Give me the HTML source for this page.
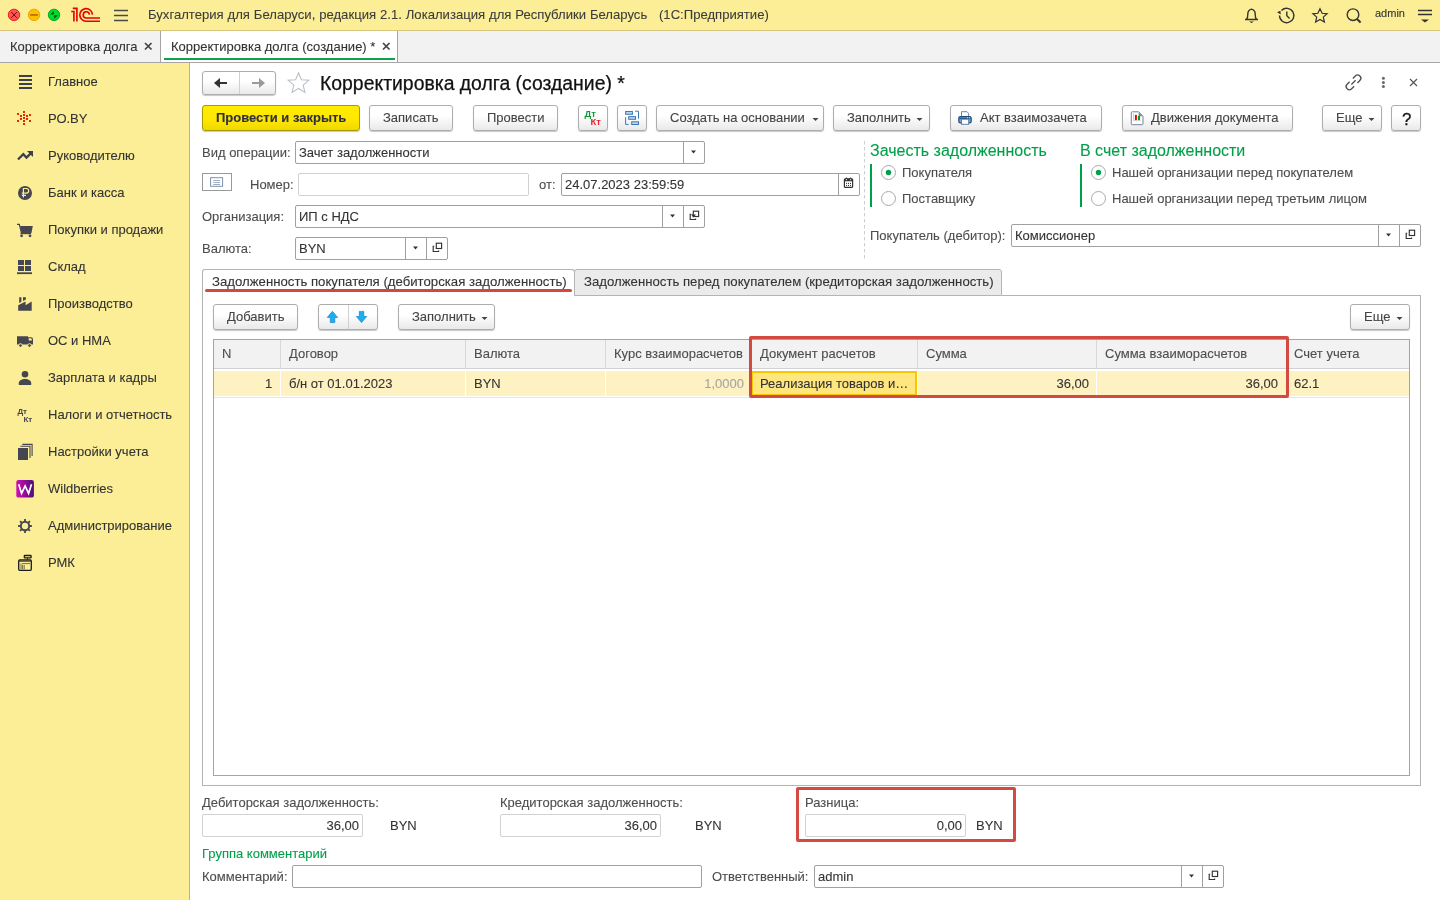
<!DOCTYPE html>
<html><head><meta charset="utf-8">
<style>
*{box-sizing:border-box;margin:0;padding:0}
html,body{width:1440px;height:900px;overflow:hidden;background:#fff}
.t{will-change:transform;-webkit-text-stroke:.1px currentColor}
body{position:relative;font-family:"Liberation Sans",sans-serif;font-size:13px;color:#4d4d4d}
.a{position:absolute}
.t{position:absolute;white-space:pre;line-height:15px;font-size:13px}
#top{left:0;top:0;width:1440px;height:31px;background:#fcee96;border-bottom:1px solid #d6c67f}
#tabs{left:0;top:31px;width:1440px;height:32px;background:#f2f2f2;border-bottom:1px solid #a6a6a6}
#side{left:0;top:63px;width:190px;height:837px;background:#fcee96;border-right:1px solid #c6b65e}
.btn{position:absolute;height:26px;border:1px solid #adadad;border-radius:3px;background:linear-gradient(#fff 40%,#e9e9e9);box-shadow:0 1px 1px rgba(0,0,0,.22);}
.inp{position:absolute;height:22px;border:1px solid #a0a0a0;border-radius:2px;background:#fff}
.inpl{position:absolute;height:22px;border:1px solid #d2d2d2;border-radius:2px;background:#fff}
.red{position:absolute;border:3px solid #d24a42;border-radius:2px}
.g{color:#00a04a}
</style></head><body>
<div id="top" class="a"></div>
<div id="tabs" class="a"></div>
<div id="side" class="a"></div>

<!-- TOP BAR -->
<svg class="a" style="left:0;top:0" width="140" height="30">
 <circle cx="14" cy="14.85" r="5.7" fill="#ff5552" stroke="#ec1c1c" stroke-width="1"/>
 <path d="M11.2 12l5.7 5.8M16.9 12l-5.7 5.8" stroke="#6e0c0c" stroke-width="1"/>
 <circle cx="34" cy="14.85" r="5.7" fill="#ffc000" stroke="#f2a300" stroke-width="1"/>
 <path d="M30.1 14.95h7.8" stroke="#b36e00" stroke-width="1.7"/>
 <circle cx="54" cy="14.85" r="5.7" fill="#00d92e" stroke="#00ad22" stroke-width="1"/>
 <path d="M50.2 14.6L53.8 11V14.6ZM54.2 18.8V15.2H58Z" fill="#005a12"/>
 <g fill="none" stroke="#e60000" stroke-width="1.6">
  <path d="M71.2 11.5H73.9V21.6"/>
  <path d="M72.8 8.4H76.9V21.6"/>
  <path d="M92.4 14.6A6.3 6.3 0 1 0 86.3 21.2H100"/>
  <path d="M89.4 14.6A3.1 3.1 0 1 0 86.3 18H100"/>
 </g>
 <path d="M114 10.5h14M114 15.5h14M114 20.5h14" stroke="#4a4a4a" stroke-width="1.3"/>
</svg>
<div class="t" style="left:148px;top:7px;color:#3c3c3c;font-size:13.1px;word-spacing:.3px">Бухгалтерия для Беларуси, редакция 2.1. Локализация для Республики Беларусь   (1С:Предприятие)</div>
<svg class="a" style="left:1240px;top:0" width="200" height="30">
 <g fill="none" stroke="#333" stroke-width="1.4">
  <path d="M5 19.5h13M6.5 19.5c1.2-1.2 1.3-2.6 1.3-5.2 0-3 1.6-4.8 3.7-5.2 2.1.4 3.7 2.2 3.7 5.2 0 2.6.1 4 1.3 5.2"/>
  <g transform="translate(-7 0)"><path d="M46.5 15.5a7.2 7.2 0 1 0 2-5"/><path d="M53.8 11.5v4.3l2.8 2.8"/></g>
  <path d="M80 8.7l2.1 4.6 5 .5-3.8 3.3 1.1 4.9-4.4-2.6-4.4 2.6 1.1-4.9-3.8-3.3 5-.5z" stroke-width="1.2"/>
  <circle cx="113" cy="14.7" r="5.8"/>
  <path d="M117 19l3.6 3.4" stroke-width="2"/>
  <path d="M178 10.5h14M178 14.5h14"/>
 </g>
 <path d="M9 21.5h5l-2.5 1.6z" fill="#333"/>
 <path d="M37 12.3l3.4-1.5.4 3.6z" fill="#333"/>
 <path d="M181 19.6h8l-4 3z" fill="#333"/>
</svg>
<div class="t" style="left:1375px;top:6px;font-size:11px;color:#333">admin</div>
<!-- TABS -->
<div class="a" style="left:160px;top:31px;width:1px;height:31px;background:#a4a4a4"></div>
<div class="a" style="left:161px;top:31px;width:237px;height:31px;background:#fff;border-right:1px solid #a4a4a4"></div>
<div class="a" style="left:164px;top:58px;width:231px;height:2px;background:#0fa24a"></div>
<div class="t" style="left:10px;top:39px;color:#333">Корректировка долга</div>
<div class="t" style="left:171px;top:39px;color:#333">Корректировка долга (создание) *</div>
<svg class="a" style="left:140px;top:40px" width="260" height="14">
 <path d="M5 3l6.5 6.5M11.5 3L5 9.5" stroke="#444" stroke-width="1.7"/>
 <path d="M243 3l6.5 6.5M249.5 3L243 9.5" stroke="#444" stroke-width="1.7"/>
</svg>

<!-- SIDEBAR -->
<div class="t" style="left:48px;top:74px;color:#333">Главное</div>
<div class="t" style="left:48px;top:111px;color:#333">РО.BY</div>
<div class="t" style="left:48px;top:148px;color:#333">Руководителю</div>
<div class="t" style="left:48px;top:185px;color:#333">Банк и касса</div>
<div class="t" style="left:48px;top:222px;color:#333">Покупки и продажи</div>
<div class="t" style="left:48px;top:259px;color:#333">Склад</div>
<div class="t" style="left:48px;top:296px;color:#333">Производство</div>
<div class="t" style="left:48px;top:333px;color:#333">ОС и НМА</div>
<div class="t" style="left:48px;top:370px;color:#333">Зарплата и кадры</div>
<div class="t" style="left:48px;top:407px;color:#333">Налоги и отчетность</div>
<div class="t" style="left:48px;top:444px;color:#333">Настройки учета</div>
<div class="t" style="left:48px;top:481px;color:#333">Wildberries</div>
<div class="t" style="left:48px;top:518px;color:#333">Администрирование</div>
<div class="t" style="left:48px;top:555px;color:#333">РМК</div>
<svg class="a" style="left:0;top:63px" width="48" height="530" viewBox="0 63 48 530">
 <g fill="#3d3f4d">
  <rect x="19" y="75" width="13" height="2"/><rect x="19" y="79" width="13" height="2"/><rect x="19" y="83" width="13" height="2"/><rect x="19" y="87" width="13" height="2"/>
 </g>
 <g fill="#e62b00"><rect x="23" y="111" width="2" height="2"/><rect x="23" y="114" width="2" height="2"/><rect x="23" y="117" width="2" height="2"/><rect x="23" y="120" width="2" height="2"/><rect x="23" y="123" width="2" height="2"/><rect x="17" y="113" width="2" height="2"/><rect x="17" y="120" width="2" height="2"/><rect x="20" y="115" width="2" height="2"/><rect x="20" y="118" width="2" height="2"/><rect x="26" y="115" width="2" height="2"/><rect x="26" y="118" width="2" height="2"/><rect x="29" y="114" width="2" height="2"/><rect x="29" y="120" width="2" height="2"/></g>
 <g fill="none" stroke="#3d3f4d" stroke-width="2.2" stroke-linejoin="miter">
  <path d="M18 159.5l5.3-5.3 3.2 3.4 4.5-4.5"/>
 </g>
 <path d="M27 151h6v6z" fill="#3d3f4d"/>
 <circle cx="25" cy="193" r="7" fill="#45464f"/>
 <path d="M23.4 197.5v-9h3a2.3 2.3 0 0 1 0 4.6h-4.6M21.8 195.3h4.2" fill="none" stroke="#fcee96" stroke-width="1.2"/>
 <path d="M17 224h2.4l.8 2h12.6l-1.4 7.2H21.6l-1.7-8.2" fill="#45464f"/>
 <path d="M17 224.3h2.3l2.4 9.6" fill="none" stroke="#45464f" stroke-width="1.2"/>
 <rect x="20.5" y="232.8" width="10.5" height="1.4" fill="#45464f"/>
 <circle cx="21.6" cy="235.8" r="1.4" fill="#45464f"/><circle cx="30" cy="235.8" r="1.4" fill="#45464f"/>
 <g fill="#45464f">
  <rect x="18" y="260" width="6" height="5"/><rect x="25" y="260" width="6" height="5"/>
  <rect x="18" y="266" width="6" height="5"/><rect x="25" y="266" width="6" height="5"/>
  <rect x="17" y="272.3" width="15" height="1.8"/>
 </g>
 <path d="M18.2 310.7V305.2L25.6 301.4V305.2L31.7 301.4V310.7ZM19.2 297.2H21.4V301.8L19.2 303ZM23 297.2H25.9V299.6L23 301.1Z" fill="#45464f"/>
 <path d="M17 336.2H28V344.6H17ZM28 337.2H31Q33 337.2 33 339.5V344.6H28Z" fill="#45464f"/>
 <path d="M28.7 338.3H30.9Q31.9 338.5 32 340.4H28.7Z" fill="#fcee96"/>
 <circle cx="20.5" cy="345.5" r="1.8" fill="#45464f" stroke="#fcee96" stroke-width="1"/><circle cx="29.5" cy="345.5" r="1.8" fill="#45464f" stroke="#fcee96" stroke-width="1"/>
 <circle cx="25" cy="374.3" r="3.3" fill="#45464f"/>
 <path d="M18.8 385v-1.8c0-2.6 2.6-4.3 6.2-4.3s6.2 1.7 6.2 4.3v1.8z" fill="#45464f"/>
 <text x="17.6" y="413.6" font-family="Liberation Sans" font-size="8" font-weight="bold" fill="#45464f" letter-spacing="-.3">Дт</text>
 <text x="23.6" y="422" font-family="Liberation Sans" font-size="8" font-weight="bold" fill="#45464f" letter-spacing="-.3">Кт</text>
 <rect x="18" y="448" width="10" height="12" fill="#45464f"/>
 <path d="M20.3 446.3h9.7v11.7M22.3 444.4h9.8v11.5" fill="none" stroke="#45464f" stroke-width="1.1"/>
 <defs><linearGradient id="wb" x1="0" y1="0" x2="1" y2="0"><stop offset="0" stop-color="#d20fb4"/><stop offset="1" stop-color="#4b0f78"/></linearGradient></defs>
 <rect x="16.3" y="480" width="17.6" height="17.6" rx="2.2" fill="url(#wb)"/>
 <path d="M18.7 484.2L21.6 493.4L25.1 486L28.6 493.4L31.5 484.2" fill="none" stroke="#fff" stroke-width="1.7" stroke-linejoin="miter"/>
 <g transform="translate(25 526)" fill="#45464f">
  <rect x="-.9" y="-7" width="1.8" height="14"/>
  <rect x="-.9" y="-7" width="1.8" height="14" transform="rotate(45)"/>
  <rect x="-.9" y="-7" width="1.8" height="14" transform="rotate(90)"/>
  <rect x="-.9" y="-7" width="1.8" height="14" transform="rotate(135)"/>
  <circle r="5.2"/>
  <circle r="3.2" fill="#fcee96"/>
 </g>
 <g fill="none" stroke="#1c1c1c" stroke-width="1.3">
  <rect x="18.7" y="560" width="12.6" height="10.3" rx="1"/>
  <rect x="24.3" y="555.5" width="6.8" height="2.4" rx=".6"/>
 </g>
 <path d="M19 561.5h12M21 563.5v6M22.6 565v4.5M24.2 565v4.5M22 563.6h8" stroke="#4a4a3a" stroke-width=".8"/>
 <path d="M27.5 558v2" stroke="#2f3038" stroke-width="1"/>
</svg>

<!-- FORM HEADER -->
<div class="btn" style="left:202px;top:71px;width:74px;height:24px"></div>
<div class="a" style="left:239px;top:72px;width:1px;height:22px;background:#d0d0d0"></div>
<svg class="a" style="left:202px;top:71px" width="74" height="24">
 <path d="M13 12h12" stroke="#333" stroke-width="2"/><path d="M12 12l6-5v10z" fill="#333"/>
 <path d="M50 12h12" stroke="#9a9a9a" stroke-width="2"/><path d="M63 12l-6-5v10z" fill="#9a9a9a"/>
</svg>
<svg class="a" style="left:286px;top:71px" width="26" height="24">
 <path d="M12.5 1.8l2.9 6.9 7.4.6-5.6 4.8 1.7 7.3-6.4-3.9-6.4 3.9 1.7-7.3-5.6-4.8 7.4-.6z" fill="none" stroke="#b9c0ca" stroke-width="1.1"/>
</svg>
<div class="t" style="left:320px;top:72px;font-size:19.4px;line-height:22px;color:#111;-webkit-text-stroke:.25px #111">Корректировка долга (создание) *</div>
<svg class="a" style="left:1340px;top:70px" width="90" height="26">
 <g transform="translate(13.5 12.4) rotate(-45)" fill="none" stroke="#4d4d4d" stroke-width="1.3">
  <path d="M2.3 -3.2H5.8A3.2 3.2 0 0 1 5.8 3.2H2.3M-2.3 -3.2H-5.8A3.2 3.2 0 0 0 -5.8 3.2H-2.3M-3 0H3"/>
 </g>
 <path d="M70 9l7 7M77 9l-7 7" stroke="#555" stroke-width="1.2" fill="none"/>
 <circle cx="43.4" cy="8.3" r="1.5" fill="#6a6a6a"/><circle cx="43.4" cy="12.5" r="1.5" fill="#6a6a6a"/><circle cx="43.4" cy="16.6" r="1.5" fill="#6a6a6a"/>
</svg>
<!-- TOOLBAR -->
<div class="btn" style="left:202px;top:105px;width:158px;border-color:#a89a00;background:linear-gradient(#ffeb00,#ffe800 55%,#f0d700)"></div>
<div class="t" style="left:216px;top:110px;font-weight:bold;color:#2e3040">Провести и закрыть</div>
<div class="btn" style="left:369px;top:105px;width:84px"></div>
<div class="t" style="left:383px;top:110px;color:#444">Записать</div>
<div class="btn" style="left:473px;top:105px;width:85px"></div>
<div class="t" style="left:487px;top:110px;color:#444">Провести</div>
<div class="btn" style="left:578px;top:105px;width:30px"></div>
<svg class="a" style="left:578px;top:105px" width="30" height="26">
 <text x="6.6" y="12" font-family="Liberation Sans" font-size="9.4" font-weight="bold" fill="#0a9a3c">Дт</text>
 <text x="12.6" y="19.9" font-family="Liberation Sans" font-size="9.4" font-weight="bold" fill="#e8202a">Кт</text>
</svg>
<div class="btn" style="left:617px;top:105px;width:30px"></div>
<svg class="a" style="left:617px;top:105px" width="30" height="26">
 <g fill="#bcd3ea" stroke="#3d7ab4" stroke-width="1">
  <rect x="8.6" y="6.5" width="6.8" height="2.8"/>
  <rect x="11.7" y="11.6" width="6.8" height="2.7"/>
  <rect x="14.7" y="16.8" width="6.8" height="2.7"/>
 </g>
 <path d="M8.6 12.2V19.4H11.7M18.1 6.2H21.5V13.7" fill="none" stroke="#3d7ab4" stroke-width="1"/>
</svg>
<div class="btn" style="left:656px;top:105px;width:168px"></div>
<div class="t" style="left:670px;top:110px;color:#444">Создать на основании</div>
<div class="btn" style="left:833px;top:105px;width:97px"></div>
<div class="t" style="left:847px;top:110px;color:#444">Заполнить</div>
<div class="btn" style="left:950px;top:105px;width:152px"></div>
<div class="t" style="left:980px;top:110px;color:#444">Акт взаимозачета</div>
<svg class="a" style="left:950px;top:105px" width="30" height="26">
 <path d="M11.5 11V6.7H17L18.6 8.3V11" fill="#fff" stroke="#56779c" stroke-width=".9"/>
 <defs><linearGradient id="pr" x1="0" y1="0" x2="0" y2="1"><stop offset="0" stop-color="#4f84bd"/><stop offset="1" stop-color="#8fb8e2"/></linearGradient></defs>
 <rect x="8.8" y="11.6" width="12.4" height="6.2" rx="1.6" fill="url(#pr)" stroke="#1d4d7f" stroke-width="1.2"/>
 <path d="M9.8 13.5H20.2" stroke="#1d4d7f" stroke-width=".9"/>
 <circle cx="17.5" cy="12.7" r=".5" fill="#fff"/><circle cx="19.5" cy="12.7" r=".5" fill="#fff"/>
 <rect x="11.5" y="14.2" width="7.2" height="5.1" fill="#fff" stroke="#56779c" stroke-width=".9"/>
</svg>
<div class="btn" style="left:1122px;top:105px;width:171px"></div>
<div class="t" style="left:1151px;top:110px;color:#444">Движения документа</div>
<svg class="a" style="left:1122px;top:105px" width="30" height="26">
 <path d="M10.2 6.8H16.7L21 11.2V18.8Q21 19.7 20.1 19.7H10.2Q9.3 19.7 9.3 18.8V7.7Q9.3 6.8 10.2 6.8z" fill="#fff" stroke="#71869b" stroke-width="1"/>
 <path d="M16.6 7.2V10.4a.8.8 0 0 0 .8.8H20.6z" fill="#71869b"/>
 <path d="M11.5 8.3V15.7H18.8" fill="none" stroke="#a9b8c4" stroke-width=".6"/>
 <rect x="12.9" y="9.9" width="2" height="5.2" fill="#f40000"/>
 <rect x="16" y="11" width="2" height="4.1" fill="#00a000"/>
</svg>
<div class="btn" style="left:1322px;top:105px;width:60px"></div>
<div class="t" style="left:1336px;top:110px;color:#444">Еще</div>
<div class="btn" style="left:1391px;top:105px;width:30px"></div>
<div class="t" style="left:1401.5px;top:109.5px;color:#111;font-size:16.8px;line-height:20px;-webkit-text-stroke:.3px #111">?</div>
<svg class="a" style="left:0;top:0" width="1440" height="140">
 <g fill="#444">
  <path d="M812.5 118h6l-3 3z"/>
  <path d="M916.5 118h6l-3 3z"/>
  <path d="M1368.5 118h6l-3 3z"/>
 </g>
</svg>

<!-- FIELDS -->
<div class="inp" style="left:1011px;top:224px;width:410px;height:23px"></div>
<div class="a" style="left:1378px;top:225px;width:1px;height:21px;background:#a0a0a0"></div>
<div class="a" style="left:1399px;top:225px;width:1px;height:21px;background:#a0a0a0"></div>
<div class="t" style="left:202px;top:145px">Вид операции:</div>
<div class="inp" style="left:295px;top:141px;width:410px;height:23px"></div>
<div class="a" style="left:683px;top:142px;width:1px;height:21px;background:#a0a0a0"></div>
<div class="t" style="left:299px;top:145px;color:#333">Зачет задолженности</div>
<div class="a" style="left:202px;top:173px;width:30px;height:18px;border:1px solid #999;background:#fff"></div>
<svg class="a" style="left:202px;top:173px" width="30" height="18">
 <rect x="8.6" y="4.7" width="12" height="8.6" fill="none" stroke="#7b90ad" stroke-width="1"/>
 <path d="M11.2 7.5h6.8M11.2 9.5h6.8M11.2 11.5h6.8" stroke="#8797ab" stroke-width=".8"/>
</svg>
<div class="t" style="left:250px;top:177px">Номер:</div>
<div class="inpl" style="left:298px;top:173px;width:231px;height:23px"></div>
<div class="t" style="left:539px;top:177px">от:</div>
<div class="inp" style="left:561px;top:173px;width:299px;height:23px"></div>
<div class="a" style="left:838px;top:174px;width:1px;height:21px;background:#a0a0a0"></div>
<div class="t" style="left:565px;top:177px;color:#333">24.07.2023 23:59:59</div>
<svg class="a" style="left:838px;top:173px" width="22" height="23">
 <rect x="6.4" y="5.8" width="8.2" height="8.6" rx="1" fill="none" stroke="#333" stroke-width="1.2"/>
 <rect x="6.4" y="5.8" width="8.2" height="2.5" fill="#333"/><rect x="7.9" y="6.2" width="1.1" height="1" fill="#fff"/><rect x="12" y="6.2" width="1.1" height="1" fill="#fff"/><circle cx="8.45" cy="5.2" r=".75" fill="#333"/><circle cx="12.55" cy="5.2" r=".75" fill="#333"/>
 <g fill="#333"><circle cx="8.6" cy="10.4" r=".55"/><circle cx="10.5" cy="10.4" r=".55"/><circle cx="12.5" cy="10.4" r=".55"/><circle cx="8.6" cy="12.4" r=".55"/><circle cx="10.5" cy="12.4" r=".55"/><circle cx="12.5" cy="12.4" r=".55"/></g>
</svg>
<div class="t" style="left:202px;top:209px">Организация:</div>
<div class="inp" style="left:295px;top:205px;width:410px;height:23px"></div>
<div class="a" style="left:662px;top:206px;width:1px;height:21px;background:#a0a0a0"></div>
<div class="a" style="left:683px;top:206px;width:1px;height:21px;background:#a0a0a0"></div>
<div class="t" style="left:299px;top:209px;color:#333">ИП с НДС</div>
<div class="t" style="left:202px;top:241px">Валюта:</div>
<div class="inp" style="left:295px;top:237px;width:153px;height:23px"></div>
<div class="a" style="left:405px;top:238px;width:1px;height:21px;background:#a0a0a0"></div>
<div class="a" style="left:426px;top:238px;width:1px;height:21px;background:#a0a0a0"></div>
<div class="t" style="left:299px;top:241px;color:#333">BYN</div>
<svg class="a" style="left:0;top:0" width="1440" height="270"><g fill="#333">
<path d="M691.0 150.5h5l-2.5 3z"/><path d="M670.0 214.5h5l-2.5 3z"/><path d="M691.0 214.5h5l-2.5 3z"/><path d="M413.0 246.5h5l-2.5 3z"/><path d="M1386.0 233.5h5l-2.5 3z"/></g><path d="M434.2 246.2h-1v5.3h5.4v-1" fill="none" stroke="#333" stroke-width="1.15"/><rect x="436.3" y="243.2" width="5.3" height="5.3" fill="none" stroke="#333" stroke-width="1.15"/><path d="M691.2 214.2h-1v5.3h5.4v-1" fill="none" stroke="#333" stroke-width="1.15"/><rect x="693.3" y="211.2" width="5.3" height="5.3" fill="none" stroke="#333" stroke-width="1.15"/><path d="M1407.2 233.2h-1v5.3h5.4v-1" fill="none" stroke="#333" stroke-width="1.15"/><rect x="1409.3" y="230.2" width="5.3" height="5.3" fill="none" stroke="#333" stroke-width="1.15"/>
 <path d="M864.5 141V259" stroke="#cfcfcf" stroke-width="1" stroke-dasharray="3.5 2.5"/>
 <rect x="870" y="164" width="2" height="43" fill="#00a04a"/>
 <rect x="1080" y="164" width="2" height="43" fill="#00a04a"/>
 <g fill="#fff" stroke="#a8a8a8" stroke-width="1">
  <circle cx="888.5" cy="172.5" r="7"/><circle cx="888.5" cy="198.5" r="7"/>
  <circle cx="1098.5" cy="172.5" r="7"/><circle cx="1098.5" cy="198.5" r="7"/>
 </g>
 <circle cx="888.5" cy="172.5" r="2.7" fill="#00a04a"/>
 <circle cx="1098.5" cy="172.5" r="2.7" fill="#00a04a"/>
</svg>
<div class="t g" style="left:870px;top:142px;font-size:16px;line-height:18px">Зачесть задолженность</div>
<div class="t g" style="left:1080px;top:142px;font-size:16px;line-height:18px">В счет задолженности</div>
<div class="t" style="left:902px;top:165px">Покупателя</div>
<div class="t" style="left:902px;top:191px">Поставщику</div>
<div class="t" style="left:1112px;top:165px">Нашей организации перед покупателем</div>
<div class="t" style="left:1112px;top:191px">Нашей организации перед третьим лицом</div>
<div class="t" style="left:870px;top:228px">Покупатель (дебитор):</div>
<div class="t" style="left:1015px;top:228px;color:#333">Комиссионер</div>

<!-- TAB PANEL -->
<div class="a" style="left:202px;top:295px;width:1219px;height:491px;border:1px solid #b4b4b4;border-top:none"></div>
<div class="a" style="left:1002px;top:295px;width:419px;height:1px;background:#b4b4b4"></div>
<div class="a" style="left:202px;top:269px;width:373px;height:27px;border:1px solid #b4b4b4;border-bottom:none;border-radius:3px 3px 0 0;background:#fff"></div>
<div class="a" style="left:574px;top:269px;width:428px;height:27px;border:1px solid #b4b4b4;border-radius:3px 3px 0 0;background:#ebebeb"></div>
<div class="a" style="left:205px;top:289px;width:367px;height:3px;border-radius:1.5px;background:#d3483c"></div>
<div class="t" style="left:212px;top:274px;color:#333;font-size:13.2px">Задолженность покупателя (дебиторская задолженность)</div>
<div class="t" style="left:584px;top:274px;color:#333;font-size:13.2px">Задолженность перед покупателем (кредиторская задолженность)</div>
<!-- TABLE TOOLBAR -->
<div class="btn" style="left:213px;top:304px;width:85px;height:26px"></div>
<div class="t" style="left:227px;top:309px;color:#444">Добавить</div>
<div class="btn" style="left:318px;top:304px;width:60px;height:26px"></div>
<div class="a" style="left:348px;top:305px;width:1px;height:24px;background:#d0d0d0"></div>
<svg class="a" style="left:318px;top:304px" width="60" height="26">
 <path d="M14.4 7.3L19.6 13.4H16.8V18.6H12.3V13.4H9.3Z" fill="#19b0f2" stroke="#1a84c4" stroke-width=".7"/>
 <path d="M43.5 18.6L48.7 12.5H45.8V7.4H41.3V12.5H38.4Z" fill="#19b0f2" stroke="#1a84c4" stroke-width=".7"/>
</svg>
<div class="btn" style="left:398px;top:304px;width:97px;height:26px"></div>
<div class="t" style="left:412px;top:309px;color:#444">Заполнить</div>
<div class="btn" style="left:1350px;top:304px;width:60px;height:26px"></div>
<div class="t" style="left:1364px;top:309px;color:#444">Еще</div>
<svg class="a" style="left:0;top:300px" width="1440" height="30"><g fill="#444">
 <path d="M481.5 17h6l-3 3z"/><path d="M1396.5 17h6l-3 3z"/>
</g></svg>
<!-- TABLE -->
<div class="a" style="left:213px;top:339px;width:1197px;height:437px;border:1px solid #a4a4a4;background:#fff"></div>
<div class="a" style="left:214px;top:340px;width:1195px;height:29px;background:#f2f2f2;border-bottom:1px solid #d2d2d2"></div>
<div class="a" style="left:214px;top:371px;width:1195px;height:25px;background:#fff2c2"></div>
<div class="a" style="left:214px;top:397px;width:1195px;height:1px;background:#e4e4e4"></div>
<div class="a" style="left:280px;top:340px;width:1px;height:29px;background:#d8d8d8"></div>
<div class="a" style="left:280px;top:371px;width:1px;height:25px;background:#fff"></div>
<div class="a" style="left:465px;top:340px;width:1px;height:29px;background:#d8d8d8"></div>
<div class="a" style="left:465px;top:371px;width:1px;height:25px;background:#fff"></div>
<div class="a" style="left:605px;top:340px;width:1px;height:29px;background:#d8d8d8"></div>
<div class="a" style="left:605px;top:371px;width:1px;height:25px;background:#fff"></div>
<div class="a" style="left:917px;top:340px;width:1px;height:29px;background:#d8d8d8"></div>
<div class="a" style="left:917px;top:371px;width:1px;height:25px;background:#fff"></div>
<div class="a" style="left:1096px;top:340px;width:1px;height:29px;background:#d8d8d8"></div>
<div class="a" style="left:1096px;top:371px;width:1px;height:25px;background:#fff"></div>
<div class="a" style="left:1287px;top:340px;width:1px;height:29px;background:#d8d8d8"></div>
<div class="a" style="left:1287px;top:371px;width:1px;height:25px;background:#fff"></div>
<div class="a" style="left:750px;top:340px;width:1px;height:29px;background:#d8d8d8"></div>
<div class="a" style="left:751px;top:371px;width:166px;height:25px;background:#ffe67f;border:2px solid #f8c600"></div>
<div class="t" style="left:222px;top:346px">N</div>
<div class="t" style="left:289px;top:346px">Договор</div>
<div class="t" style="left:474px;top:346px">Валюта</div>
<div class="t" style="left:614px;top:346px">Курс взаиморасчетов</div>
<div class="t" style="left:760px;top:346px">Документ расчетов</div>
<div class="t" style="left:926px;top:346px">Сумма</div>
<div class="t" style="left:1105px;top:346px">Сумма взаиморасчетов</div>
<div class="t" style="left:1294px;top:346px">Счет учета</div>
<div class="t" style="left:265px;top:376px;color:#333">1</div>
<div class="t" style="left:289px;top:376px;color:#333">б/н от 01.01.2023</div>
<div class="t" style="left:474px;top:376px;color:#333">BYN</div>
<div class="t" style="left:600px;top:376px;width:144px;text-align:right;color:#a5a5a5">1,0000</div>
<div class="t" style="left:760px;top:376px;color:#333">Реализация товаров и…</div>
<div class="t" style="left:920px;top:376px;width:169px;text-align:right;color:#333">36,00</div>
<div class="t" style="left:1100px;top:376px;width:178px;text-align:right;color:#333">36,00</div>
<div class="t" style="left:1294px;top:376px;color:#333">62.1</div>
<div class="red" style="left:749px;top:336px;width:540px;height:62px"></div>

<!-- BOTTOM -->
<div class="t" style="left:202px;top:795px">Дебиторская задолженность:</div>
<div class="inpl" style="left:202px;top:814px;width:161px;height:23px"></div>
<div class="t" style="left:206px;top:818px;width:153px;text-align:right;color:#333">36,00</div>
<div class="t" style="left:390px;top:818px;color:#333">BYN</div>
<div class="t" style="left:500px;top:795px">Кредиторская задолженность:</div>
<div class="inpl" style="left:500px;top:814px;width:161px;height:23px"></div>
<div class="t" style="left:504px;top:818px;width:153px;text-align:right;color:#333">36,00</div>
<div class="t" style="left:695px;top:818px;color:#333">BYN</div>
<div class="t" style="left:805px;top:795px">Разница:</div>
<div class="inpl" style="left:805px;top:814px;width:161px;height:23px"></div>
<div class="t" style="left:809px;top:818px;width:153px;text-align:right;color:#333">0,00</div>
<div class="t" style="left:976px;top:818px;color:#333">BYN</div>
<div class="red" style="left:796px;top:787px;width:220px;height:55px"></div>
<div class="t g" style="left:202px;top:846px">Группа комментарий</div>
<div class="t" style="left:202px;top:869px">Комментарий:</div>
<div class="inp" style="left:292px;top:865px;width:410px;height:23px"></div>
<div class="t" style="left:712px;top:869px">Ответственный:</div>
<div class="inp" style="left:814px;top:865px;width:410px;height:23px"></div>
<div class="a" style="left:1181px;top:866px;width:1px;height:21px;background:#a0a0a0"></div>
<div class="a" style="left:1202px;top:866px;width:1px;height:21px;background:#a0a0a0"></div>
<div class="t" style="left:818px;top:869px;color:#333">admin</div>
<svg class="a" style="left:0;top:800px" width="1440" height="100"><g fill="#333"><path d="M1189 74.5h5l-2.5 3z"/></g>
<path d="M1210.2 74.2h-1v5.3h5.4v-1" fill="none" stroke="#333" stroke-width="1.15"/><rect x="1212.3" y="71.2" width="5.3" height="5.3" fill="none" stroke="#333" stroke-width="1.15"/>
</svg>
</body></html>
